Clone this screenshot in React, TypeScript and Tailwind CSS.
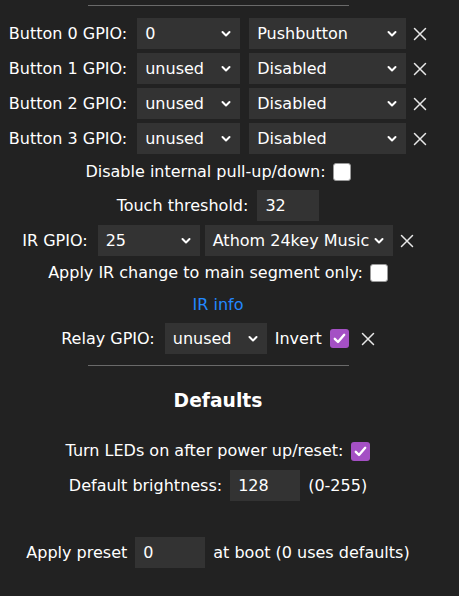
import React from "react";

const font = { fontFamily: '"DejaVu Sans", Verdana, sans-serif' };

function Chevron() {
  return (
    <svg width="10" height="7" viewBox="0 0 10 7" className="pointer-events-none absolute right-[9px] top-1/2 -translate-y-1/2">
      <path d="M1.5 1.5 L5 5 L8.5 1.5" fill="none" stroke="#fff" strokeWidth="2" strokeLinecap="round" strokeLinejoin="round" />
    </svg>
  );
}

function Select({ value, w }: { value: string; w: string }) {
  return (
    <div className={`relative h-[31px] ${w}`}>
      <div className="h-full w-full bg-[#333] pl-[8px] pr-[20px] flex items-center text-white whitespace-nowrap overflow-hidden">
        {value}
      </div>
      <Chevron />
    </div>
  );
}

function Num({ value, w }: { value: string; w: string }) {
  return (
    <div className={`h-[31px] ${w} bg-[#333] pl-[8px] flex items-center text-white`}>{value}</div>
  );
}

function Close() {
  return (
    <svg width="14" height="14" viewBox="0 0 14 14" className="shrink-0">
      <path d="M1.5 1.5 L12.5 12.5 M12.5 1.5 L1.5 12.5" stroke="#e8e8e8" strokeWidth="1.5" strokeLinecap="round" />
    </svg>
  );
}

function Check({ on }: { on?: boolean }) {
  if (on)
    return (
      <span className="inline-flex w-[19px] h-[19px] rounded-[3px] bg-[#a450c4] items-center justify-center">
        <svg width="13" height="11" viewBox="0 0 13 11">
          <path d="M1.8 5.8 L5 9 L11.2 1.8" fill="none" stroke="#fff" strokeWidth="2.4" strokeLinecap="round" strokeLinejoin="round" />
        </svg>
      </span>
    );
  return <span className="inline-block w-[18px] h-[18px] rounded-[3px] bg-white border border-[#9a9a9a]" />;
}

function ButtonRow({ n, pin, type }: { n: number; pin: string; type: string }) {
  return (
    <div className="h-[35px] flex items-center justify-center">
      <span className="mr-[10px]">Button {n} GPIO:</span>
      <Select value={pin} w="w-[103px]" />
      <div className="w-[9px]" />
      <Select value={type} w="w-[157px]" />
      <div className="w-[7px]" />
      <Close />
    </div>
  );
}

export default function App() {
  return (
    <div className="min-h-screen w-[459px] bg-[#222] text-white text-[16px]" style={font}>
      <div className="w-[436px] flex flex-col items-stretch">
        <div className="mx-auto mt-[5px] w-[261px] border-t border-[#6a6a6a]" />
        <div className="mt-[10px]">
          <ButtonRow n={0} pin="0" type="Pushbutton" />
          <ButtonRow n={1} pin="unused" type="Disabled" />
          <ButtonRow n={2} pin="unused" type="Disabled" />
          <ButtonRow n={3} pin="unused" type="Disabled" />
        </div>

        <div className="h-[32px] flex items-center justify-center gap-[7px]">
          <span>Disable internal pull-up/down:</span>
          <Check />
        </div>

        <div className="h-[35px] flex items-center justify-center gap-[9px]">
          <span>Touch threshold:</span>
          <Num value="32" w="w-[62px]" />
        </div>

        <div className="h-[35px] flex items-center justify-center">
          <span className="mr-[10px]">IR GPIO:</span>
          <Select value="25" w="w-[102px]" />
          <div className="w-[5px]" />
          <Select value="Athom 24key Music" w="w-[188px]" />
          <div className="w-[7px]" />
          <Close />
        </div>

        <div className="h-[30px] flex items-center justify-center gap-[7px]">
          <span>Apply IR change to main segment only:</span>
          <Check />
        </div>

        <div className="h-[33px] flex items-center justify-center">
          <a className="text-[#2288ff]" href="#">IR info</a>
        </div>

        <div className="h-[35px] flex items-center justify-center">
          <span className="mr-[10px]">Relay GPIO:</span>
          <Select value="unused" w="w-[102px]" />
          <span className="ml-[8px] mr-[8px]">Invert</span>
          <Check on />
          <div className="w-[12px]" />
          <Close />
        </div>

        <div className="mx-auto mt-[9px] w-[261px] border-t border-[#6a6a6a]" />

        <h3 className="mt-[23px] text-center text-[18.72px] font-bold leading-[24px]">Defaults</h3>

        <div className="mt-[23px] h-[30px] flex items-center justify-center gap-[8px]">
          <span>Turn LEDs on after power up/reset:</span>
          <Check on />
        </div>

        <div className="mt-[2px] h-[35px] flex items-center justify-center">
          <span className="mr-[8px]">Default brightness:</span>
          <Num value="128" w="w-[70px]" />
          <span className="ml-[8px]">(0-255)</span>
        </div>

        <div className="mt-[32px] h-[35px] flex items-center justify-center">
          <span className="mr-[8px]">Apply preset</span>
          <Num value="0" w="w-[70px]" />
          <span className="ml-[8px]">at boot (0 uses defaults)</span>
        </div>
      </div>
    </div>
  );
}
